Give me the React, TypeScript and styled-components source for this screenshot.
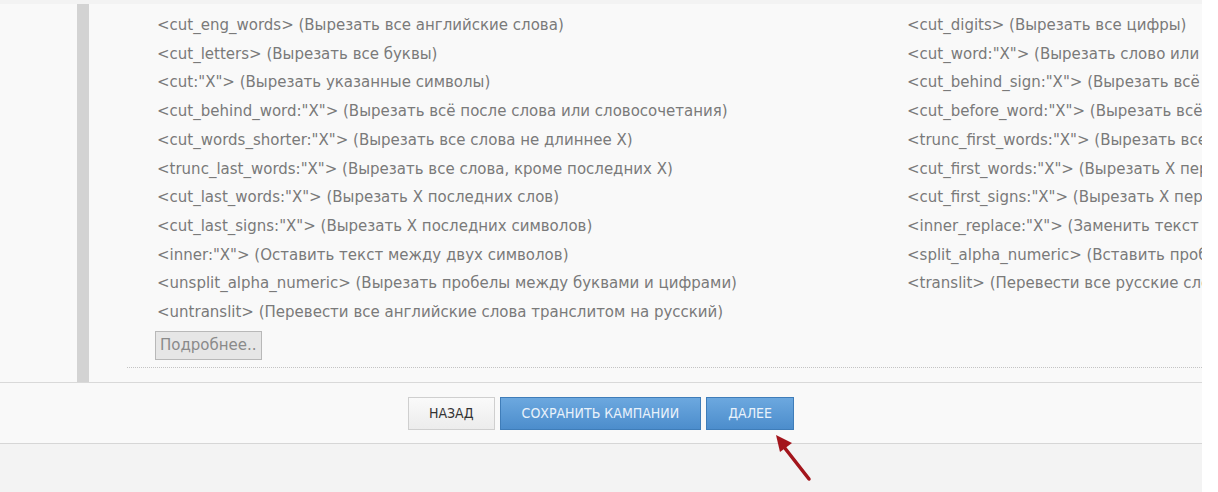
import React from "react";
import styled, { createGlobalStyle } from "styled-components";

const GlobalStyle = createGlobalStyle`
  html, body {
    margin: 0;
    padding: 0;
    background: #ffffff;
  }
  body {
    font-family: "DejaVu Sans", "Liberation Sans", sans-serif;
  }
`;

const Page = styled.div`
  width: 1202px;
  height: 492px;
  padding-top: 4px;
  box-sizing: border-box;
  background: #f3f3f3;
  display: flex;
  flex-direction: column;
`;

const Content = styled.div`
  display: flex;
  height: 378px;
  background: #f9f9f9;
  border-bottom: 1px solid #d9d9d9;
`;

const Gutter = styled.div`
  width: 77px;
  flex-shrink: 0;
`;

const SideBar = styled.div`
  width: 12px;
  flex-shrink: 0;
  background: #d3d3d3;
`;

const Body = styled.div`
  flex: 1;
  padding-left: 38px;
  display: flex;
  flex-direction: column;
`;

const Inner = styled.div`
  flex: 1;
  padding: 7px 0 0 30px;
  border-bottom: 1px dotted #c4c4c4;
  margin-bottom: 14px;
  overflow: hidden;
`;

const Columns = styled.div`
  display: grid;
  grid-template-columns: 750px 1fr;
`;

const Column = styled.div`
  display: flex;
  flex-direction: column;
  min-width: 0;
`;

const Line = styled.div`
  font-size: 15px;
  line-height: 28.7px;
  color: #7a7a7a;
  white-space: nowrap;
`;

const MoreButton = styled.button`
  margin: 4px 0 0 -2px;
  padding: 5px 4px 6px;
  font-family: "DejaVu Sans", sans-serif;
  font-size: 15px;
  line-height: 16px;
  color: #8a8a8a;
  background: #e6e6e6;
  border: 1px solid #b8b8b8;
  cursor: pointer;
`;

const Footer = styled.div`
  position: relative;
  height: 60px;
  background: #f9f9f9;
  border-bottom: 1px solid #d6d6d6;
  display: flex;
  justify-content: center;
  align-items: center;
  gap: 5px;
`;

const Button = styled.button<{ $primary?: boolean }>`
  height: 33px;
  padding: 0 ${(p) => (p.$primary ? "21px" : "20px")};
  font-family: "DejaVu Sans Condensed", "DejaVu Sans", sans-serif;
  font-size: 14px;
  text-transform: uppercase;
  cursor: pointer;
  color: ${(p) => (p.$primary ? "#e9f2fb" : "#333333")};
  background: ${(p) =>
    p.$primary
      ? "linear-gradient(#6ca8df, #4c8dcc)"
      : "linear-gradient(#fafafa, #ececec)"};
  border: 1px solid ${(p) => (p.$primary ? "#3f7db9" : "#cfcfcf")};
`;

const Arrow = styled.svg`
  position: absolute;
  left: 771px;
  top: 52px;
  overflow: visible;
`;

const leftItems = [
  '<cut_eng_words> (Вырезать все английские слова)',
  '<cut_letters> (Вырезать все буквы)',
  '<cut:"X"> (Вырезать указанные символы)',
  '<cut_behind_word:"X"> (Вырезать всё после слова или словосочетания)',
  '<cut_words_shorter:"X"> (Вырезать все слова не длиннее X)',
  '<trunc_last_words:"X"> (Вырезать все слова, кроме последних X)',
  '<cut_last_words:"X"> (Вырезать X последних слов)',
  '<cut_last_signs:"X"> (Вырезать X последних символов)',
  '<inner:"X"> (Оставить текст между двух символов)',
  '<unsplit_alpha_numeric> (Вырезать пробелы между буквами и цифрами)',
  '<untranslit> (Перевести все английские слова транслитом на русский)',
];

const rightItems = [
  '<cut_digits> (Вырезать все цифры)',
  '<cut_word:"X"> (Вырезать слово или словосочетание)',
  '<cut_behind_sign:"X"> (Вырезать всё после символа)',
  '<cut_before_word:"X"> (Вырезать всё до слова)',
  '<trunc_first_words:"X"> (Вырезать все слова, кроме первых X)',
  '<cut_first_words:"X"> (Вырезать X первых слов)',
  '<cut_first_signs:"X"> (Вырезать X первых символов)',
  '<inner_replace:"X"> (Заменить текст между символами)',
  '<split_alpha_numeric> (Вставить пробелы между буквами и цифрами)',
  '<translit> (Перевести все русские слова транслитом)',
];

const App = () => {
  return (
    <>
      <GlobalStyle />
      <Page>
        <Content>
          <Gutter />
          <SideBar />
          <Body>
            <Inner>
              <Columns>
                <Column>
                  {leftItems.map((t) => (
                    <Line key={t}>{t}</Line>
                  ))}
                </Column>
                <Column>
                  {rightItems.map((t) => (
                    <Line key={t}>{t}</Line>
                  ))}
                </Column>
              </Columns>
              <MoreButton>Подробнее..</MoreButton>
            </Inner>
          </Body>
        </Content>
        <Footer>
          <Button>Назад</Button>
          <Button $primary>Сохранить кампании</Button>
          <Button $primary>Далее</Button>
          <Arrow width="40" height="50" viewBox="0 0 40 50">
            <line x1="38" y1="44" x2="13" y2="12" stroke="#a3151c" strokeWidth="3.5" strokeLinecap="round" />
            <polygon points="5,0 21,8 9,17" fill="#a3151c" />
          </Arrow>
        </Footer>
      </Page>
    </>
  );
};

export default App;
